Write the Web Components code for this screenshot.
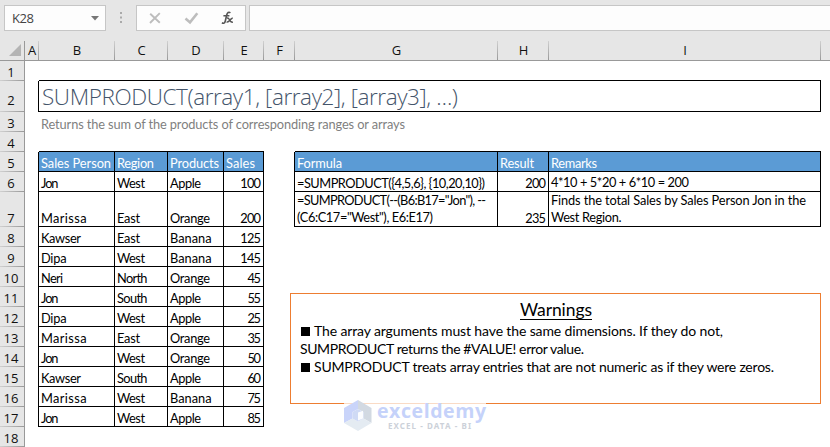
<!DOCTYPE html>
<html lang="en">
<head>
<meta charset="utf-8">
<title>SUMPRODUCT</title>
<style>
html,body{margin:0;padding:0;background:#fff;overflow:hidden}
body{font-family:Lato,"Liberation Sans",sans-serif;font-size:12.8px;color:#000}
</style>
</head>
<body>
<sheet-app></sheet-app>
<script>
// One line of text, tracked so that it spans the width given in "w".
class FitText extends HTMLElement{
  connectedCallback(){
    if(this.shadowRoot)return;
    this.attachShadow({mode:'open'}).innerHTML='<style>:host{display:block;white-space:pre;width:max-content}span{display:inline-block}</style><span><slot></slot></span>';
    const w=parseFloat(this.getAttribute('w')),n=[...this.textContent].length;
    if(!w)return;
    const s=this.shadowRoot.querySelector('span');
    const ls=(w-s.getBoundingClientRect().width)/Math.max(1,n-1);
    s.style.letterSpacing=ls+'px';
    s.style.marginRight=-ls+'px';
  }
}
class FormulaBar extends HTMLElement{
  connectedCallback(){
    this.attachShadow({mode:'open'}).innerHTML=`<style>
    :host{display:flex;height:41px;box-sizing:border-box;padding:5px 0 10px 4px;background:#e6e6e6}
    div{box-sizing:border-box;border:1px solid #c6c6c6;background:#fdfdfd;display:flex;align-items:center}
    .name{width:102px;padding:0 6px 0 7px;justify-content:space-between;font:13px/24px "Open Sans",sans-serif;color:#444}
    .dots{flex:none;margin:7px 14px 0 14px}
    .tools{width:110px}.input{flex:1;border-right:0;margin-left:3px}
    svg{display:block}
    </style>
    <div class="name"><fit-text w="22">K28</fit-text><svg width="8" height="5"><path d="M0 0H8L4 4.5Z" fill="#777"/></svg></div>
    <svg class="dots" width="2" height="12"><path d="M0 0h2v2H0zM0 4.5h2v2H0zM0 9h2v2H0z" fill="#aaa"/></svg>
    <div class="tools"><svg width="108" height="24" viewBox="0 0 108 24" fill="none">
      <path d="M13.2 7.8L22.8 16.8M22.8 7.2L13 17" stroke="#bdbdbd" stroke-width="1.9"/>
      <path d="M48.5 12.5L53 16.4L60.3 7.3" stroke="#bdbdbd" stroke-width="2.6"/>
      <path d="M93.4 6.8C91.8 5.6 90.3 6.5 89.7 9L88.3 15C87.8 17.2 86.6 17.8 84.9 16.8M86.4 9.8H92.4" stroke="#555" stroke-width="1.6"/>
      <path d="M90 12.2C93 11.2 92.2 17.2 95.8 16M95.8 12.3C93.4 11.6 92.6 17 89.6 16" stroke="#555" stroke-width="1.5"/>
    </svg></div>
    <div class="input"></div>`;
  }
}
class WarnBox extends HTMLElement{
  connectedCallback(){
    this.attachShadow({mode:'open'}).innerHTML=`<style>
    :host{display:block;box-sizing:border-box;border:1px solid #ed7d31;background:#fff;padding:5px 9px;font-size:14px;line-height:18px}
    h2{margin:0 0 0 1px;font-weight:400;font-size:17.5px;line-height:23px;display:flex;justify-content:center}
    h2 fit-text{border-bottom:1px solid #000;line-height:22px;height:20px;margin-bottom:2px}
    p{margin:0;display:flex;position:relative;top:-.5px}
    i{width:9px;height:9px;background:#000;margin:5px 4px 0 1px}
    </style>
    <h2><fit-text w="72">Warnings</fit-text></h2>
    <p><i></i><fit-text w="409">The array arguments must have the same dimensions. If they do not,</fit-text></p>
    <p><fit-text w="284">SUMPRODUCT returns the #VALUE! error value.</fit-text></p>
    <p><i></i><fit-text w="460">SUMPRODUCT treats array entries that are not numeric as if they were zeros.</fit-text></p>`;
  }
}
class BrandMark extends HTMLElement{
  connectedCallback(){
    this.attachShadow({mode:'open'}).innerHTML=`<style>
    :host{display:flex;gap:5px;background:rgba(255,255,255,.72)}
    svg{display:block;margin-top:1px}
    .n{font:700 19.5px/19px "Open Sans",sans-serif;color:#c5d2fa;margin-top:2px}
    .t{font:700 8px/9px "Noto Sans",sans-serif;color:#ccd1d9;margin:1px 0 0 11px}
    </style>
    <svg width="28" height="31" viewBox="0 0 28 31">
      <path d="M14 0L0 8V23L8.5 18.5V12L14 9Z" fill="#c9d4fa"/>
      <path d="M14 0L27.5 8V23L19.5 18.5V12L14 9Z" fill="#d2d9e2"/>
      <path d="M0 23L8.5 18.5L14 21.5L19.5 18.5L27.5 23L14 31Z" fill="#e4ebf2"/>
      <path d="M8.5 12L14 9L19.5 12V18.5L14 21.5L8.5 18.5Z" fill="#cfdaf5"/>
      <path d="M14 12.5L19 10.8V18.5L14 20.5Z" fill="#fbfcfe"/>
    </svg>
    <div><fit-text class="n" w="109">exceldemy</fit-text><fit-text class="t" w="83">EXCEL - DATA - BI</fit-text></div>`;
  }
}
class GridCell extends HTMLElement{
  connectedCallback(){
    this.attachShadow({mode:'open'}).innerHTML=`<style>
    :host{display:flex;flex-direction:column;justify-content:flex-end;box-sizing:border-box;min-width:0;min-height:0;padding:0 2px;line-height:16px}
    :host([r]){border-right:1px solid #000}:host([b]){border-bottom:1px solid #000}
    :host([num]){align-items:flex-end;padding-right:2px}
    :host([head]){background:#5b9bd5;color:#fff}
    :host([title]){font:300 22.5px/28px "Open Sans",sans-serif;color:#44546a;padding:0 3px}
    :host([sub]){color:#7f7f7f}
    :host([two]){line-height:17px;padding-bottom:0}
    :host([up]){padding-bottom:1px}
    </style><slot></slot>`;
  }
}
class HeadCell extends HTMLElement{
  connectedCallback(){
    this.attachShadow({mode:'open'}).innerHTML=`<style>
    :host{display:flex;box-sizing:border-box;justify-content:center;align-items:flex-end;background:#e6e6e6;font:14px/17px "Open Sans","Noto Sans",sans-serif;color:#111}
    :host([col]){border-bottom:1px solid #999;background:linear-gradient(#d0d0d0,#999) right/1px 100% no-repeat #e6e6e6;font-size:13px;padding-bottom:1px}
    :host([last]){background:#e6e6e6}
    :host([row]){border-right:1px solid #999;background:linear-gradient(90deg,#d0d0d0,#999) bottom/100% 1px no-repeat #e6e6e6;padding-bottom:0;font-size:13px}
    :host([second]){padding-bottom:3px}
    :host([corner]){border:solid #999;border-width:0 1px 1px 0;justify-content:flex-end;padding:0 3px 4px 0;background:#e6e6e6}
    </style><slot></slot>`;
  }
}
const cell=(c,r,attrs,html='')=>`<grid-cell ${attrs} style="grid-area:${r+1}/${c}">${html}</grid-cell>`;
const fit=(t,w)=>`<fit-text w="${w}">${t.replace(/</g,'&lt;')}</fit-text>`;
class SheetGrid extends HTMLElement{
  connectedCallback(){
    const W={Jon:17.5,West:28,Apple:31,Marissa:45.5,Kawser:40,Dipa:25.5,Neri:22,East:23,North:30.5,South:30.5,Orange:40,Banana:41.5};
    const rows=['Jon West Apple 100','Marissa East Orange 200','Kawser East Banana 125','Dipa West Banana 145','Neri North Orange 45','Jon South Apple 55','Dipa West Apple 25','Marissa East Orange 35','Jon West Orange 50','Kawser South Apple 60','Marissa West Banana 75','Jon West Apple 85'];
    let h='<head-cell corner style="grid-area:1/1"><svg width="12" height="12"><path d="M12 0V12H0Z" fill="#b4b4b4"/></svg></head-cell>';
    [...'ABCDEFGHI',''].forEach((l,i)=>h+=`<head-cell col ${l?'':'last'} style="grid-area:1/${i+2}">${l}</head-cell>`);
    for(let r=1;r<=18;r++)h+=`<head-cell row ${r==2?'second':''} style="grid-area:${r+1}/1"><span>${r}</span></head-cell>`;
    // Right edge of column A and F, bottom edge of the rows above each table.
    h+=cell(2,2,'r');
    for(let r=5;r<=17;r++)h+=cell(2,r,'r');
    for(let r=5;r<=7;r++)h+=cell(7,r,'r');
    for(const c of [3,4,5,6,8,9,10])h+=cell(c,4,'b');
    h+='<grid-cell b style="grid-area:2/3/auto/11"></grid-cell>';
    h+='<grid-cell b r title style="grid-area:3/3/auto/11">'+fit('SUMPRODUCT(array1, [array2], [array3], …)',416)+'</grid-cell>';
    h+='<grid-cell sub style="grid-area:4/3/auto/11">'+fit('Returns the sum of the products of corresponding ranges or arrays',364)+'</grid-cell>';
    [['Sales Person',70,3],['Region',37,4],['Products',49,5],['Sales',29,6],['Formula',45,8],['Result',34,9],['Remarks',46,10]].forEach(([t,w,c])=>h+=cell(c,5,'b r head',fit(t,w)));
    rows.forEach((row,i)=>row.split(' ').forEach((t,c)=>h+=cell(c+3,i+6,'b r'+(c==3?' num':''),fit(t,c==3?t.length*7.2-.8:W[t]))));
    h+=cell(8,6,'b r',fit('=SUMPRODUCT({4,5,6}, {10,20,10})',188))+cell(9,6,'b r num',fit('200',20.8))+cell(10,6,'b r up',fit('4*10 + 5*20 + 6*10 = 200',138));
    h+=cell(8,7,'b r two',fit('=SUMPRODUCT(--(B6:B17="Jon"), --',189)+fit('(C6:C17="West"), E6:E17)',136))+cell(9,7,'b r num',fit('235',20.8));
    h+=cell(10,7,'b r two',fit('Finds the total Sales by Sales Person Jon in the',255)+fit('West Region.',70.5));
    this.attachShadow({mode:'open'}).innerHTML=`<style>
    :host{display:grid;grid-template-columns:25px 14px 76px 53px 56px 40px 31px 203px 51px 272px 9px;
    grid-template-rows:20px 20px 31px 20px 20px 20px 20px 35px repeat(11,20px)}
    svg{display:block}span{margin-right:2px}
    </style>${h}`;
  }
}
class SheetApp extends HTMLElement{
  connectedCallback(){
    this.attachShadow({mode:'open'}).innerHTML=`<style>
    :host{display:block;position:relative;width:830px;height:447px;overflow:hidden;background:#fff}
    warn-box{position:absolute;left:290px;top:293px;width:531px;height:111px}
    brand-mark{position:absolute;left:344px;top:399px;width:142px;height:34px}
    </style><formula-bar></formula-bar><sheet-grid></sheet-grid><warn-box></warn-box><brand-mark></brand-mark>`;
  }
}
customElements.define('fit-text',FitText);
customElements.define('formula-bar',FormulaBar);
customElements.define('warn-box',WarnBox);
customElements.define('brand-mark',BrandMark);
customElements.define('grid-cell',GridCell);
customElements.define('head-cell',HeadCell);
customElements.define('sheet-grid',SheetGrid);
customElements.define('sheet-app',SheetApp);
</script>
</body>
</html>
